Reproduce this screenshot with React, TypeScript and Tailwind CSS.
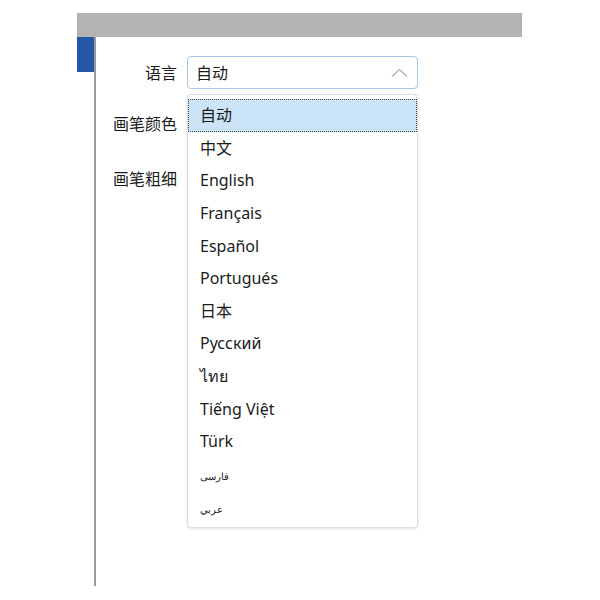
import React from 'react';

const languages = [
  '自动',
  '中文',
  'English',
  'Français',
  'Español',
  'Portugués',
  '日本',
  'Русский',
  'ไทย',
  'Tiếng Việt',
  'Türk',
  'فارسی',
  'عربي',
];

const font = { fontFamily: '"Noto Sans", "Noto Sans CJK SC", sans-serif' };

export default function App() {
  return (
    <div className="w-[600px] h-[600px] bg-white pt-[13px] pl-[77px] text-[#1b1b1b]" style={font}>
      <div className="w-[445px] h-[24px] bg-[#b3b3b3]" />
      <div className="flex">
        <div className="w-[17px]">
          <div className="h-[35px] bg-[#2457a6]" />
        </div>
        <div className="w-[2px] h-[549px] bg-[#9a9a9a]" />

        {/* settings form */}
        <div className="relative flex-1">
          <div className="mt-[19px] flex items-center">
            <div className="w-[81px] text-right text-[16px]">语言</div>
            <div className="ml-[10px] w-[231px] h-[33px] rounded-[4px] border border-[#a9c6e6] flex items-center justify-between pl-[8px] pr-[9px]">
              <span className="text-[16px]">自动</span>
              <svg width="17" height="9" viewBox="0 0 17 9" fill="none">
                <path d="M1 8.5 L8.5 1.5 L16 8.5" stroke="#ababab" strokeWidth="1.2" />
              </svg>
            </div>
          </div>
          <div className="mt-[18px] flex items-center h-[33px]">
            <div className="w-[81px] text-right text-[16px]">画笔颜色</div>
          </div>
          <div className="mt-[22px] flex items-center h-[33px]">
            <div className="w-[81px] text-right text-[16px]">画笔粗细</div>
          </div>

          {/* open dropdown list */}
          <div className="absolute left-[91px] top-[57px] w-[231px] h-[434px] rounded-[4px] border border-[#dedede] bg-white shadow-[0_1px_3px_rgba(0,0,0,0.12)] pt-[4px]">
            {languages.map((lang, i) => (
              <div
                key={lang}
                className={
                  i === 0
                    ? 'h-[32.6px] flex items-center pl-[11px] text-[16px] bg-[#cce4f7] border border-dotted border-[#444]'
                    : i >= 11
                    ? 'h-[32.6px] flex items-center pl-[12px] pt-[6px] text-[10px]'
                    : 'h-[32.6px] flex items-center pl-[12px] text-[16px]'
                }
              >
                {lang}
              </div>
            ))}
          </div>
        </div>
      </div>
    </div>
  );
}
